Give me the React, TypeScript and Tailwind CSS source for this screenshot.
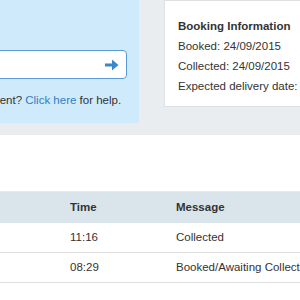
import React from 'react'

const rows = [
  { date: '24/09/2015', time: '11:16', message: 'Collected' },
  { date: '24/09/2015', time: '08:29', message: 'Booked/Awaiting Collection' },
]

export default function App() {
  return (
    <div className="flex h-[300px] w-[300px] flex-col overflow-hidden bg-[#e9edf0] font-['Liberation_Sans',Arial,sans-serif] text-[11.5px] text-[#333]">
      <div className="-ml-[120px] flex w-[460px] items-start gap-[25px] pb-[12px]">
        <div className="w-[259px] shrink-0 bg-[#cfeafa] px-[12px] pt-[50px] pb-[15px]">
          <div className="flex h-[29px] items-center justify-end rounded-[4px] border border-[#5b9bd5] bg-white pr-[7px]">
            <svg width="14" height="12" viewBox="0 0 14 12">
              <rect x="0" y="4.5" width="8" height="3" fill="#3b88c9" />
              <polygon points="7,0.5 13.5,6 7,11.5" fill="#3b88c9" />
            </svg>
          </div>
          <p className="mt-[13px] whitespace-nowrap leading-[16px]">
            Can't find your shipment?{' '}
            <a className="text-[#2d7ec6]">Click here</a> for help.
          </p>
        </div>
        <div className="w-[176px] shrink-0 border border-[#dde1e4] bg-white px-[13px] pt-[15px] pb-[10px] leading-[20px]">
          <h3 className="font-bold whitespace-nowrap">Booking Information</h3>
          <p className="whitespace-nowrap">Booked: 24/09/2015</p>
          <p className="whitespace-nowrap">Collected: 24/09/2015</p>
          <p className="whitespace-nowrap">Expected delivery date:</p>
        </div>
      </div>

      <div className="flex-1 bg-white pt-[56px]">
        <table className="-ml-[120px] w-[560px] table-fixed border-collapse text-left">
          <thead>
            <tr className="h-[31px] border-t border-[#e6e9eb] bg-[#dae5eb]">
              <th className="w-[182px] px-[8px] font-bold">Date</th>
              <th className="w-[106px] px-[8px] font-bold">Time</th>
              <th className="px-[8px] font-bold">Message</th>
            </tr>
          </thead>
          <tbody>
            {rows.map((r) => (
              <tr key={r.time} className="h-[30px] border-b border-[#dedede]">
                <td className="px-[8px]">{r.date}</td>
                <td className="px-[8px]">{r.time}</td>
                <td className="px-[8px] whitespace-nowrap">{r.message}</td>
              </tr>
            ))}
          </tbody>
        </table>
      </div>
    </div>
  )
}
